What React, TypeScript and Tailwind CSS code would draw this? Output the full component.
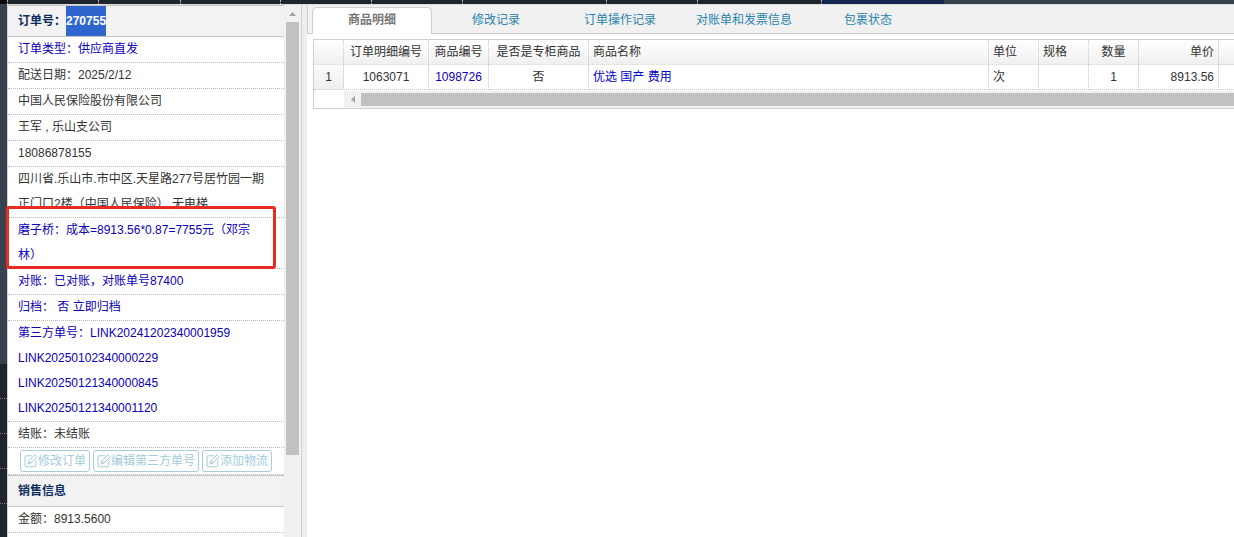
import React from "react";

const tabs = ["商品明细", "修改记录", "订单操作记录", "对账单和发票信息", "包裹状态"];

const linkNumbers = [
  "LINK20250102340000229",
  "LINK20250121340000845",
  "LINK20250121340001120",
];

function EditIcon() {
  return (
    <svg viewBox="0 0 14 14" className="size-3.5 shrink-0" fill="none" stroke="currentColor" strokeLinejoin="round" aria-hidden="true">
      <path d="M8.2 1.8H2a1 1 0 0 0-1 1v9a1 1 0 0 0 1 1h8.8a1 1 0 0 0 1-1V6.4" />
      <path d="M3.9 10.2l.8-3.2L11.2.7l2 2-6.3 6.4z" />
      <path d="M4.7 7l2.2 2.1" />
    </svg>
  );
}

function SectionTitle({ children }: { children: React.ReactNode }) {
  return (
    <h2 className="flex h-8 items-stretch border-y border-[#c6c6c6] bg-[#f2f2f2] px-2.5 text-xs leading-[30px] font-bold text-[#0e2d5f]">
      {children}
    </h2>
  );
}

function Row({ children, link = false }: { children: React.ReactNode; link?: boolean }) {
  return (
    <div className={`relative border-b border-dotted border-[#bbb] px-2.5 ${link ? "text-[#0a00b8]" : ""}`}>
      {children}
    </div>
  );
}

function ActionButton({ label }: { label: string }) {
  return (
    <button type="button" className="flex h-[22px] items-center rounded-[3px] border border-[#a9ccd8] bg-white px-[3px] text-[#a3cbd9]">
      <EditIcon />
      {label}
    </button>
  );
}

function BackdropTop() {
  return (
    <div className="flex h-1 shrink-0 bg-[#36434e]">
      <div className="w-2 border-r border-dotted border-[#bbb] bg-[#05070a]" />
      <div className="w-[91px] border-r border-dotted border-[#bbb] bg-[#20252b]" />
      <div className="w-[82px] border-r border-dotted border-[#bbb] bg-[#20252b]" />
      <div className="w-[100px] border-r border-dotted border-[#bbb] bg-[#20252b]" />
      <div className="w-[91px] border-r border-dotted border-[#bbb] bg-[#20252b]" />
      <div className="w-[91px] border-r border-dotted border-[#bbb] bg-[#20252b]" />
      <div className="w-[144px] border-r border-dotted border-[#bbb] bg-[#20252b]" />
      <div className="w-[91px] border-r border-dotted border-[#bbb] bg-[#20252b]" />
      <div className="w-[124px] border-r border-dotted border-[#bbb] bg-[#20252b]" />
      <div className="w-[122px] bg-[#12264f]" />
    </div>
  );
}

function BackdropLeft() {
  return (
    <div className="w-[7px] shrink-0 bg-[#20252b]">
      <div className="h-[360px] bg-[#36434f]" />
      {[0, 1, 2, 3].map((i) => (
        <div key={i} className="h-[35px] border-b border-dotted border-[#777]" />
      ))}
    </div>
  );
}

function Sidebar() {
  return (
    <aside className="flex w-[295px] shrink-0 border-x border-[#cfcfcf] bg-white">
      <div className="min-w-0 flex-1 leading-[25px]">
        <SectionTitle>
          订单号：<span className="bg-[#3165ce] text-white">270755</span>
        </SectionTitle>
        <Row link><a href="#type">订单类型：供应商直发</a></Row>
        <Row>配送日期：2025/2/12</Row>
        <Row>中国人民保险股份有限公司</Row>
        <Row>王军 , 乐山支公司</Row>
        <Row>18086878155</Row>
        <Row>四川省.乐山市.市中区.天星路277号居竹园一期<br />正门口2楼（中国人民保险） 无电梯</Row>
        <Row link>
          <a href="#remark">磨子桥：成本=8913.56*0.87=7755元（邓宗<br />林）</a>
          <div className="pointer-events-none absolute -top-3 right-2 -bottom-px -left-0.5 rounded-[3px] border-3 border-[#e92c22]" />
        </Row>
        <Row link><a href="#reconcile">对账：已对账，对账单号87400</a></Row>
        <Row link><a href="#archive">归档： 否 立即归档</a></Row>
        <Row link>
          <a href="#third" className="block">第三方单号：LINK20241202340001959</a>
          {linkNumbers.map((n) => (
            <a key={n} href="#third" className="block">{n}</a>
          ))}
        </Row>
        <Row>结账：未结账</Row>
        <Row>
          <div className="flex gap-[3px] px-0.5 py-0.5">
            <ActionButton label="修改订单" />
            <ActionButton label="编辑第三方单号" />
            <ActionButton label="添加物流" />
          </div>
        </Row>
        <SectionTitle>销售信息</SectionTitle>
        <Row>金额：8913.5600</Row>
      </div>
      <div className="flex w-[17px] flex-col bg-[#f1f1f1] px-0.5">
        <div className="flex h-[17px] shrink-0 items-center justify-center text-[#a3a3a3]">
          <svg viewBox="0 0 7 4" className="h-1 w-[7px]" fill="currentColor" aria-hidden="true"><path d="M3.5 0L7 4H0z" /></svg>
        </div>
        <div className="min-h-0 flex-1">
          <div className="h-[84%] bg-[#c1c1c1]" />
        </div>
      </div>
    </aside>
  );
}

const headCell = "border-r border-b border-dotted border-r-[#c4c4c4] border-b-[#ddd] px-1 font-normal whitespace-nowrap";
const bodyCell = "border-r border-b border-dotted border-[#c4c4c4] px-1 whitespace-nowrap";

function ItemTable() {
  return (
    <div className="overflow-hidden border-y border-l border-[#cfcfcf]">
      <table className="w-full table-fixed border-separate border-spacing-0">
        <colgroup>
          <col className="w-[30px]" />
          <col className="w-[85px]" />
          <col className="w-[60px]" />
          <col className="w-[100px]" />
          <col className="w-[400px]" />
          <col className="w-[50px]" />
          <col className="w-[50px]" />
          <col className="w-[50px]" />
          <col className="w-[80px]" />
          <col />
        </colgroup>
        <thead>
          <tr className="h-[25px] bg-linear-to-b from-white to-[#efefef]">
            <th className={headCell} />
            <th className={headCell}>订单明细编号</th>
            <th className={headCell}>商品编号</th>
            <th className={headCell}>是否是专柜商品</th>
            <th className={`${headCell} text-left`}>商品名称</th>
            <th className={`${headCell} text-left`}>单位</th>
            <th className={`${headCell} text-left`}>规格</th>
            <th className={headCell}>数量</th>
            <th className={`${headCell} text-right`}>单价</th>
            <th className="border-b border-[#ddd]" />
          </tr>
        </thead>
        <tbody>
          <tr className="h-[25px]">
            <td className={`${bodyCell} bg-linear-to-b from-[#fafafa] to-[#efefef] text-center`}>1</td>
            <td className={`${bodyCell} text-center`}>1063071</td>
            <td className={`${bodyCell} text-center text-[#0a00b8]`}><a href="#item">1098726</a></td>
            <td className={`${bodyCell} text-center`}>否</td>
            <td className={`${bodyCell} text-[#0000cc]`}><a href="#item">优选 国产 费用</a></td>
            <td className={bodyCell}>次</td>
            <td className={bodyCell} />
            <td className={`${bodyCell} text-center`}>1</td>
            <td className={`${bodyCell} text-right`}>8913.56</td>
            <td className="border-b border-dotted border-[#c4c4c4]" />
          </tr>
        </tbody>
      </table>
      <div className="mt-px flex h-[17px] pl-[30px]">
        <div className="flex w-[17px] shrink-0 items-center justify-center bg-[#f1f1f1] text-[#a3a3a3]">
          <svg viewBox="0 0 4 7" className="h-[7px] w-1" fill="currentColor" aria-hidden="true"><path d="M0 3.5L4 0v7z" /></svg>
        </div>
        <div className="flex-1 bg-[#f1f1f1] py-0.5">
          <div className="h-[13px] bg-[#c1c1c1]" />
        </div>
      </div>
    </div>
  );
}

export default function App() {
  return (
    <div className="flex h-screen flex-col overflow-hidden bg-[#20252b] font-['Liberation_Sans','Noto_Sans_CJK_SC',sans-serif] text-xs text-[#333]">
      <BackdropTop />
      <div className="flex min-h-0 flex-1">
        <BackdropLeft />
        <div className="flex min-w-0 flex-1 border-t border-[#dcdcdc]">
          <Sidebar />
          <div className="w-[5px] shrink-0 bg-[#eee]" />
          <main className="min-w-0 flex-1 bg-white">
            <nav className="flex h-[29px] items-end gap-1 border-b border-l border-[#cfcfcf] bg-[#f1f1f1] pl-1">
              {tabs.map((t, i) => (
                <a
                  key={t}
                  href={`#tab-${i}`}
                  className={
                    i === 0
                      ? "-mb-px h-[27px] w-[120px] rounded-t-[5px] border border-b-0 border-[#cfcfcf] bg-white text-center leading-[25px] font-bold text-[#777]"
                      : "h-[26px] w-[120px] text-center leading-[26px] text-[#2a83ad]"
                  }
                >
                  {t}
                </a>
              ))}
            </nav>
            <div className="pt-[5px] pl-1.5">
              <ItemTable />
            </div>
          </main>
        </div>
      </div>
    </div>
  );
}
